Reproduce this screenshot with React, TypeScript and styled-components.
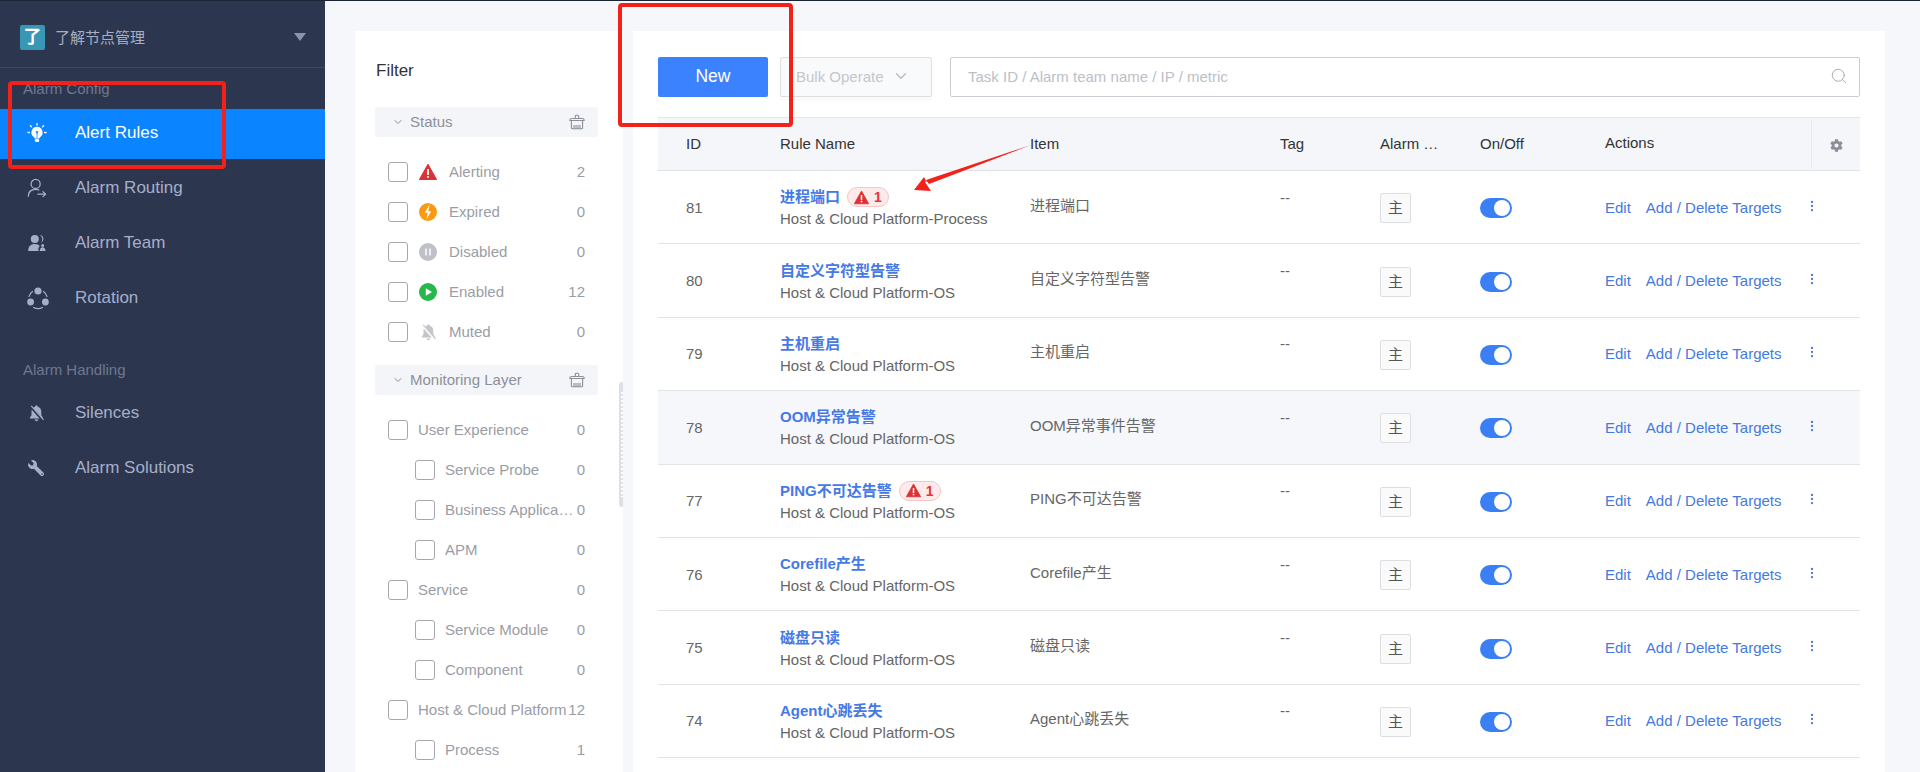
import React from "react";
import styled, { createGlobalStyle } from "styled-components";
import { ChevronDown, Search, MoreVertical } from "lucide-react";
import { FaWrench, FaCog } from "react-icons/fa";

const Global = createGlobalStyle`
  html, body { margin: 0; padding: 0; height: 100%; overflow: hidden; }
  body { font-family: "Liberation Sans", "Noto Sans CJK SC", sans-serif; font-size: 15px; background: #f5f7fb; }
  * { box-sizing: border-box; }
`;

const Shell = styled.div`
  position: relative;
  display: flex;
  width: 1920px;
  height: 772px;
  overflow: hidden;
  border-top: 1px solid #1b2336;
`;
const Sidebar = styled.aside`
  width: 325px;
  flex: none;
  background: #2d364f;
  display: flex;
  flex-direction: column;
`;
const Brand = styled.div`
  height: 67px;
  flex: none;
  display: flex;
  align-items: center;
  padding: 6px 18px 0 20px;
  border-bottom: 1px solid #3f4860;
`;
const BrandLogo = styled.span`
  width: 25px;
  height: 25px;
  border-radius: 2px;
  background: #3797b5;
  color: #fff;
  font-size: 18px;
  font-weight: 700;
  line-height: 25px;
  text-align: center;
  margin-right: 10px;
`;
const BrandName = styled.span`
  flex: 1;
  color: #a7afc4;
  font-size: 15px;
  padding-bottom: 2px;
`;
const Caret = styled.span`
  width: 0;
  height: 0;
  border-left: 6px solid transparent;
  border-right: 6px solid transparent;
  border-top: 8px solid #8a93aa;
  margin-right: 1px;
`;
const SectionLabel = styled.div<{ $top: number; $bottom: number }>`
  color: #6f788f;
  font-size: 15px;
  line-height: 18px;
  padding-left: 23px;
  margin-top: ${(p) => p.$top}px;
  margin-bottom: ${(p) => p.$bottom}px;
`;
const NavList = styled.nav`
  display: flex;
  flex-direction: column;
  gap: 5px;
`;
const NavItem = styled.div<{ $active?: boolean }>`
  height: 50px;
  display: flex;
  align-items: center;
  font-size: 17px;
  padding-bottom: 2px;
  color: ${(p) => (p.$active ? "#fff" : "#a5afc9")};
  background: ${(p) => (p.$active ? "#0a84ff" : "transparent")};
`;
const NavIcon = styled.span`
  width: 75px;
  padding-left: 28px;
  display: flex;
  align-items: center;
  flex: none;
`;
const Main = styled.main`
  flex: 1;
  display: flex;
  gap: 10px;
  padding: 30px 30px 0 30px;
  min-width: 0;
`;
const FilterPanel = styled.section`
  position: relative;
  width: 268px;
  flex: none;
  background: #fff;
  padding: 0 25px 0 20px;
  overflow: hidden;
`;
const FilterTitle = styled.div`
  font-size: 17px;
  line-height: 20px;
  color: #333;
  padding: 30px 0 0 1px;
  height: 76px;
`;
const GroupHead = styled.div`
  height: 30px;
  background: #f3f5f9;
  border-radius: 2px;
  display: flex;
  align-items: center;
  padding: 0 13px 1px 17px;
  color: #8d9098;
  font-size: 15px;
  margin-bottom: 15px;
`;
const GroupName = styled.span`
  flex: 1;
  margin-left: 6px;
  padding-bottom: 1px;
`;
const Group = styled.div`
  margin-bottom: 13px;
`;
const FilterRow = styled.div<{ $nested?: boolean }>`
  height: 40px;
  display: flex;
  align-items: center;
  padding: 0 13px 0 ${(p) => (p.$nested ? 40 : 13)}px;
  color: #9a9da5;
  font-size: 15px;
  line-height: 20px;
`;
const Check = styled.span`
  width: 20px;
  height: 20px;
  flex: none;
  border: 1px solid #a6a8ad;
  border-radius: 3px;
  margin-right: 10px;
`;
const StatusIcon = styled.span`
  width: 18px;
  height: 18px;
  flex: none;
  margin: 0 12px 0 1px;
  display: flex;
  align-items: center;
  justify-content: center;
`;
const RowLabel = styled.span`
  flex: 1;
  min-width: 0;
  white-space: nowrap;
  overflow: hidden;
  text-overflow: ellipsis;
  padding-bottom: 1px;
`;
const RowCount = styled.span`
  padding-bottom: 1px;
`;
const Thumb = styled.div`
  position: absolute;
  right: -3px;
  top: 351px;
  width: 7px;
  height: 125px;
  border-radius: 3px;
  background: #dde0e6;
  &::after {
    content: "";
    position: absolute;
    left: 2px;
    top: 10px;
    bottom: 10px;
    width: 2px;
    background: repeating-linear-gradient(to bottom, #fff 0 2px, transparent 2px 4px);
  }
`;
const TablePanel = styled.section`
  width: 1252px;
  flex: none;
  background: #fff;
  padding: 26px 25px 0;
  overflow: hidden;
`;
const Toolbar = styled.div`
  display: flex;
  height: 40px;
  margin-bottom: 20px;
`;
const NewButton = styled.button`
  width: 110px;
  height: 40px;
  border: none;
  border-radius: 2px;
  background: #3b82ff;
  color: #fff;
  font: 400 17.5px "Liberation Sans", sans-serif;
  padding: 0 0 1px;
  margin-right: 12px;
`;
const BulkSelect = styled.div`
  width: 152px;
  height: 40px;
  border: 1px solid #dedfe3;
  border-radius: 2px;
  background: #f9fafb;
  color: #c3c6cc;
  font-size: 15px;
  display: flex;
  align-items: center;
  justify-content: space-between;
  padding: 0 21px 2px 15px;
  margin-right: 18px;
  box-shadow: 0 4px 0 #fafafb;
`;
const SearchBox = styled.div`
  flex: 1;
  height: 40px;
  border: 1px solid #c9ccd2;
  border-radius: 2px;
  display: flex;
  align-items: center;
  justify-content: space-between;
  color: #bcc0c7;
  font-size: 15px;
  padding: 0 11px 2px 17px;
`;
const gridCols = "122px 250px 250px 100px 100px 125px 1fr";
const HeadRow = styled.div`
  display: grid;
  grid-template-columns: ${gridCols};
  height: 54px;
  align-items: center;
  background: #f4f6fa;
  border-top: 1px solid #e4e6eb;
  border-bottom: 1px solid #dfe2e7;
  color: #333;
  font-size: 15px;
`;
const HeadCell = styled.div<{ $first?: boolean }>`
  padding-left: ${(p) => (p.$first ? 28 : 0)}px;
  padding-bottom: 2px;
`;
const HeadLast = styled.div`
  display: flex;
  align-items: center;
  height: 100%;
  justify-content: space-between;
`;
const HeadLabel = styled.span`
  padding-bottom: 3px;
`;
const GearCell = styled.div`
  width: 49px;
  height: 50px;
  border-left: 1px solid #e8eaef;
  display: flex;
  align-items: center;
  justify-content: center;
  color: #8a8f99;
  padding-top: 3px;
`;
const Row = styled.div<{ $hover?: boolean }>`
  display: grid;
  grid-template-columns: ${gridCols};
  height: 73.4px;
  align-items: center;
  border-bottom: 1px solid #e2e4e9;
  color: #666;
  font-size: 15px;
  background: ${(p) => (p.$hover ? "#f5f7fb" : "#fff")};
`;
const IdCell = styled.div`
  padding-left: 28px;
  color: #666;
`;
const NameCell = styled.div`
  line-height: 22px;
  padding-top: 2px;
`;
const NameLine = styled.div`
  display: flex;
  align-items: center;
  height: 20px;
  margin-top: 1px;
  margin-bottom: 1px;
`;
const RuleLink = styled.span`
  color: #4579e4;
  font-weight: 700;
`;
const AlertPill = styled.span`
  margin-left: 7px;
  width: 42px;
  height: 20px;
  border: 1px solid #f6c6c6;
  border-radius: 10px;
  background: #fdeaea;
  color: #e2353b;
  font-size: 14px;
  font-weight: 700;
  display: flex;
  align-items: center;
  justify-content: center;
  gap: 5px;
`;
const ItemCell = styled.div`
  padding-bottom: 6px;
`;
const TagCell = styled.div`
  padding-bottom: 20px;
`;
const RoleBadge = styled.span`
  display: block;
  width: 31px;
  height: 30px;
  border: 1px solid #dcdee3;
  border-radius: 2px;
  background: #fafafa;
  color: #555;
  font-size: 15px;
  line-height: 28px;
  text-align: center;
  margin-top: 2px;
`;
const Toggle = styled.span`
  display: flex;
  align-items: center;
  justify-content: flex-end;
  width: 32px;
  height: 20px;
  padding-right: 2px;
  border-radius: 10px;
  background: #3b7ff5;
  margin-top: 2px;
`;
const Knob = styled.span`
  width: 16px;
  height: 16px;
  border-radius: 50%;
  background: #fff;
`;
const Actions = styled.div`
  display: flex;
  align-items: center;
  color: #4479e0;
  font-size: 15px;
`;
const ActionLink = styled.span`
  margin-right: 15px;
`;
const Dots = styled.span`
  display: flex;
  margin-left: 23px;
  margin-top: -3px;
  color: #4f7bd6;
`;
const Box = styled.div<{ $x: number; $y: number; $w: number; $h: number }>`
  position: absolute;
  left: ${(p) => p.$x}px;
  top: ${(p) => p.$y}px;
  width: ${(p) => p.$w}px;
  height: ${(p) => p.$h}px;
  border: 4px solid #f2221b;
  border-radius: 4px;
  pointer-events: none;
`;
const ArrowSvg = styled.svg`
  position: absolute;
  left: 905px;
  top: 139px;
`;

const Bulb = () => (
  <svg width="20" height="20" viewBox="0 0 20 20" fill="#fff" style={{ marginLeft: -1 }}>
    <path d="M10 3.8a5.6 5.6 0 0 0-3.3 10.1c.7.5.9 1 .9 1.6h4.8c0-.6.2-1.1.9-1.6A5.6 5.6 0 0 0 10 3.8z" />
    <rect x="7.8" y="16" width="4.4" height="3" rx="1.2" />
    <path d="M8.4 8.2h3.2L10 11z" fill="#0a84ff" />
    <rect x="9.6" y="10" width=".8" height="5" fill="#0a84ff" />
    <g stroke="#fff" strokeWidth="1.3" strokeLinecap="round">
      <path d="M10 .6v1.5M3.4 2.8l1.1 1.1M16.6 2.8l-1.1 1.1M.9 9.5h1.5M17.6 9.5h1.5" />
    </g>
  </svg>
);
const RouteIcon = () => (
  <svg width="20" height="20" viewBox="0 0 22 22" fill="none" stroke="#a5afc9" strokeWidth="1.4" strokeLinecap="round" strokeLinejoin="round" style={{ marginLeft: -1 }}>
    <circle cx="9.5" cy="6.5" r="5" />
    <path d="M1.5 20c0-4.5 2.8-7.5 8-7.5 1.5 0 2.6.2 3.5.7" />
    <path d="M12 17.8h8.5M17.5 15l3 2.8-3 2.7" />
  </svg>
);
const TeamIcon = () => (
  <svg width="18" height="18" viewBox="0 0 18 18" fill="#a5afc9">
    <circle cx="6.8" cy="5" r="4" />
    <path d="M.2 17c0-4.6 2.6-7 6.6-7 2.4 0 4 .8 5 2.2-1 .7-1.5 1.6-1.5 2.8 0 .8.2 1.4.5 2z" />
    <path d="M11.8 1.1a4 4 0 0 1 1 7.7 4.8 4.8 0 0 0-1-7.7z" />
    <circle cx="14.6" cy="11.6" r="1.5" />
    <path d="M11.8 17c0-2.4 1.2-3.8 2.8-3.8s2.9 1.4 2.9 3.8z" />
  </svg>
);
const BellOff = ({ color, cut, size = 17 }: { color: string; cut: string; size?: number }) => (
  <svg width={size} height={size} viewBox="0 0 17 17">
    <path d="M8.5.6c.8 0 1.3.5 1.3 1.2 2.3.6 3.5 2.5 3.5 5v3.4l1.6 2.3v.9H1.9v-.9l1.6-2.3V6.8c0-2.5 1.2-4.4 3.5-5C7 1.1 7.7.6 8.5.6z" fill={color} />
    <path d="M6.6 14.6h3.8c-.2 1-1 1.7-1.9 1.7s-1.7-.7-1.9-1.7z" fill={color} />
    <path d="M2.7 1.8 14.9 15.5" stroke={cut} strokeWidth="2.4" />
    <path d="M3.2.8 15.6 14.8" stroke={color} strokeWidth="1.1" />
  </svg>
);
const RotationIcon = () => (
  <svg width="24" height="24" viewBox="0 0 24 24" style={{ marginLeft: -2 }}>
    <g fill="#a5afc9">
      <circle cx="12" cy="5" r="3.6" />
      <circle cx="4.6" cy="16" r="3.4" />
      <circle cx="19.4" cy="16" r="3.4" />
    </g>
    <g fill="none" stroke="#a5afc9" strokeWidth="1.2" strokeLinecap="round">
      <path d="M6.5 5.5A10 10 0 0 0 3 10.5" />
      <path d="M17.5 5.5a10 10 0 0 1 3.5 5" />
      <path d="M7.5 21.5a10 10 0 0 0 9 0" />
    </g>
  </svg>
);
const Warn = ({ size = 18 }: { size?: number }) => (
  <svg width={size} height={size} viewBox="0 0 18 18">
    <path d="M9 1.2 17.6 16.5H.4z" fill="#dc3235" stroke="#dc3235" strokeLinejoin="round" />
    <rect x="8.1" y="6" width="1.8" height="6" fill="#fff" />
    <rect x="8.1" y="13" width="1.8" height="1.8" fill="#fff" />
  </svg>
);
const ExpiredIcon = () => (
  <svg width="18" height="18" viewBox="0 0 18 18">
    <circle cx="9" cy="9" r="9" fill="#fb9a12" />
    <path d="M10.6 1.5 5.8 9.8h3l-1.4 6.7 4.8-8.3h-3z" fill="#fff" />
  </svg>
);
const DisabledIcon = () => (
  <svg width="18" height="18" viewBox="0 0 18 18">
    <circle cx="9" cy="9" r="9" fill="#bfc1c8" />
    <rect x="6" y="5.5" width="2" height="7" fill="#eceef0" />
    <rect x="10" y="5.5" width="2" height="7" fill="#eceef0" />
  </svg>
);
const EnabledIcon = () => (
  <svg width="18" height="18" viewBox="0 0 18 18">
    <circle cx="9" cy="9" r="9" fill="#27b84c" />
    <path d="M6.8 5.2 13 9l-6.2 3.8z" fill="#fff" />
  </svg>
);
const Broom = () => (
  <svg width="16" height="16" viewBox="0 0 16 16" fill="none" stroke="#8d9098" strokeWidth="1.1" strokeLinejoin="round">
    <path d="M6.3 4.5V2.2c0-.6.4-1 1-1h1.4c.6 0 1 .4 1 1v2.3" />
    <path d="M.8 6.5c0-1.2.8-2 2-2h10.4c1.2 0 2 .8 2 2z" />
    <path d="M2.4 6.5v7.2c0 .6.4 1 1 1h9.2c.6 0 1-.4 1-1V6.5" />
    <path d="M5 11v3.7M7 11v3.7M9 11v3.7M11 11v3.7" />
  </svg>
);

type FR = { label: string; count: number; icon?: React.ReactNode; nested?: boolean };
const statusRows: FR[] = [
  { label: "Alerting", count: 2, icon: <Warn /> },
  { label: "Expired", count: 0, icon: <ExpiredIcon /> },
  { label: "Disabled", count: 0, icon: <DisabledIcon /> },
  { label: "Enabled", count: 12, icon: <EnabledIcon /> },
  { label: "Muted", count: 0, icon: <BellOff color="#c3c5cb" cut="#fff" size={17} /> },
];
const layerRows: FR[] = [
  { label: "User Experience", count: 0 },
  { label: "Service Probe", count: 0, nested: true },
  { label: "Business Application", count: 0, nested: true },
  { label: "APM", count: 0, nested: true },
  { label: "Service", count: 0 },
  { label: "Service Module", count: 0, nested: true },
  { label: "Component", count: 0, nested: true },
  { label: "Host & Cloud Platform", count: 12 },
  { label: "Process", count: 1, nested: true },
];
const FilterGroup = ({ name, rows }: { name: string; rows: FR[] }) => (
  <Group>
    <GroupHead>
      <ChevronDown size={12} strokeWidth={2} />
      <GroupName>{name}</GroupName>
      <Broom />
    </GroupHead>
    {rows.map((r) => (
      <FilterRow key={r.label} $nested={r.nested}>
        <Check />
        {r.icon && <StatusIcon>{r.icon}</StatusIcon>}
        <RowLabel>{r.label}</RowLabel>
        <RowCount>{r.count}</RowCount>
      </FilterRow>
    ))}
  </Group>
);

const OS = "Host & Cloud Platform-OS";
const rules = [
  { id: 81, name: "进程端口", sub: "Host & Cloud Platform-Process", item: "进程端口", alert: true },
  { id: 80, name: "自定义字符型告警", sub: OS, item: "自定义字符型告警" },
  { id: 79, name: "主机重启", sub: OS, item: "主机重启" },
  { id: 78, name: "OOM异常告警", sub: OS, item: "OOM异常事件告警", hover: true },
  { id: 77, name: "PING不可达告警", sub: OS, item: "PING不可达告警", alert: true },
  { id: 76, name: "Corefile产生", sub: OS, item: "Corefile产生" },
  { id: 75, name: "磁盘只读", sub: OS, item: "磁盘只读" },
  { id: 74, name: "Agent心跳丢失", sub: OS, item: "Agent心跳丢失" },
];

export default function App() {
  return (
    <Shell>
      <Global />
      <Sidebar>
        <Brand>
          <BrandLogo>了</BrandLogo>
          <BrandName>了解节点管理</BrandName>
          <Caret />
        </Brand>
        <SectionLabel $top={12} $bottom={11}>Alarm Config</SectionLabel>
        <NavList>
          <NavItem $active><NavIcon><Bulb /></NavIcon>Alert Rules</NavItem>
          <NavItem><NavIcon><RouteIcon /></NavIcon>Alarm Routing</NavItem>
          <NavItem><NavIcon><TeamIcon /></NavIcon>Alarm Team</NavItem>
          <NavItem><NavIcon><RotationIcon /></NavIcon>Rotation</NavItem>
        </NavList>
        <SectionLabel $top={37} $bottom={10}>Alarm Handling</SectionLabel>
        <NavList>
          <NavItem><NavIcon><BellOff color="#a5afc9" cut="#2d364f" /></NavIcon>Silences</NavItem>
          <NavItem><NavIcon><FaWrench size={16} color="#a5afc9" style={{ transform: "scaleX(-1)" }} /></NavIcon>Alarm Solutions</NavItem>
        </NavList>
      </Sidebar>
      <Main>
        <FilterPanel>
          <FilterTitle>Filter</FilterTitle>
          <FilterGroup name="Status" rows={statusRows} />
          <FilterGroup name="Monitoring Layer" rows={layerRows} />
          <Thumb />
        </FilterPanel>
        <TablePanel>
          <Toolbar>
            <NewButton>New</NewButton>
            <BulkSelect>Bulk Operate <ChevronDown size={18} strokeWidth={1.6} color="#b5b8bf" /></BulkSelect>
            <SearchBox>
              Task ID / Alarm team name / IP / metric
              <Search size={18} strokeWidth={1.3} color="#a8acb4" />
            </SearchBox>
          </Toolbar>
          <HeadRow>
            <HeadCell $first>ID</HeadCell>
            <HeadCell>Rule Name</HeadCell>
            <HeadCell>Item</HeadCell>
            <HeadCell>Tag</HeadCell>
            <HeadCell>Alarm …</HeadCell>
            <HeadCell>On/Off</HeadCell>
            <HeadLast>
              <HeadLabel>Actions</HeadLabel>
              <GearCell><FaCog size={13} /></GearCell>
            </HeadLast>
          </HeadRow>
          {rules.map((r) => (
            <Row key={r.id} $hover={r.hover}>
              <IdCell>{r.id}</IdCell>
              <NameCell>
                <NameLine>
                  <RuleLink>{r.name}</RuleLink>
                  {r.alert && <AlertPill><Warn size={15} />1</AlertPill>}
                </NameLine>
                <div>{r.sub}</div>
              </NameCell>
              <ItemCell>{r.item}</ItemCell>
              <TagCell>--</TagCell>
              <div><RoleBadge>主</RoleBadge></div>
              <div><Toggle><Knob /></Toggle></div>
              <Actions>
                <ActionLink>Edit</ActionLink>
                <span>Add / Delete Targets</span>
                <Dots><MoreVertical size={14} /></Dots>
              </Actions>
            </Row>
          ))}
        </TablePanel>
      </Main>
      <Box $x={8} $y={80} $w={218} $h={88} />
      <Box $x={618} $y={2} $w={175} $h={124} />
      <ArrowSvg width="135" height="60" viewBox="0 0 135 60">
        <path d="M126 5 20 42l6 9L9 50 19 37l2 4z" fill="#f2221b" />
        <path d="M126 5 24 44 21 40z" fill="#f2221b" />
      </ArrowSvg>
    </Shell>
  );
}
